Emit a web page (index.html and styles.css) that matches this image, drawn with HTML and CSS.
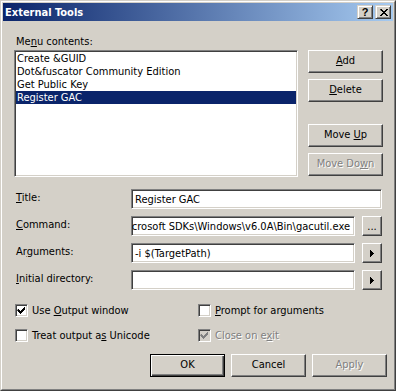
FILE: index.html
```html
<!DOCTYPE html>
<html>
<head>
<meta charset="utf-8">
<title>External Tools</title>
<link rel="stylesheet" href="styles.css">
</head>
<body>
<div class="window">
  <div class="frame">
    <div class="titlebar">
      <span class="title">External Tools</span>
      <div class="cap cap-help">?</div>
      <div class="cap cap-close"><svg width="8" height="7" viewBox="0 0 8 7"><path d="M0 0h2v1h1v1h2v-1h1v-1h2v1h-1v1h-1v1h-1v1h1v1h1v1h1v1h-2v-1h-1v-1h-2v1h-1v1h-2v-1h1v-1h1v-1h1v-1h-1v-1h-1z" fill="#000"/></svg></div>
    </div>
    <div class="client">
      <div class="menu-label">Me<u>n</u>u contents:</div>
      <div class="list-row">
        <div class="listbox">
          <div class="item">Create &amp;GUID</div>
          <div class="item">Dot&amp;fuscator Community Edition</div>
          <div class="item">Get Public Key</div>
          <div class="item selected">Register GAC</div>
        </div>
        <div class="side-btns">
          <div class="btn"><u>A</u>dd</div>
          <div class="btn"><u>D</u>elete</div>
          <div class="btn btn-sep">Move <u>U</u>p</div>
          <div class="btn disabled">Move Do<u>w</u>n</div>
        </div>
      </div>
      <div class="fields">
        <div class="flabel"><u>T</u>itle:</div>
        <div class="field field-wide">Register GAC</div>
        <div class="flabel"><u>C</u>ommand:</div>
        <div class="field field-scroll"><span>crosoft SDKs\Windows\v6.0A\Bin\gacutil.exe</span></div>
        <div class="small-btn dots">...</div>
        <div class="flabel">Ar<u>g</u>uments:</div>
        <div class="field">-i $(TargetPath)</div>
        <div class="small-btn"><svg width="4" height="7" viewBox="0 0 4 7"><path d="M0 0h1v1h1v1h1v1h1v1h-1v1h-1v1h-1v1h-1z" fill="#000"/></svg></div>
        <div class="flabel"><u>I</u>nitial directory:</div>
        <div class="field"></div>
        <div class="small-btn"><svg width="4" height="7" viewBox="0 0 4 7"><path d="M0 0h1v1h1v1h1v1h1v1h-1v1h-1v1h-1v1h-1z" fill="#000"/></svg></div>
      </div>
      <div class="checks">
        <div class="check">
          <span class="box"><svg width="9" height="9" viewBox="0 0 9 9"><path d="M1 3h1v1h1v1h1v-1h1v-1h1v-1h1v-1h1v3h-1v1h-1v1h-1v1h-1v1h-1v-1h-1v-1h-1v-1h-1z" fill="#000"/></svg></span>
          <span>Use <u>O</u>utput window</span>
        </div>
        <div class="check">
          <span class="box"></span>
          <span><u>P</u>rompt for arguments</span>
        </div>
        <div class="check">
          <span class="box"></span>
          <span>Treat output a<u>s</u> Unicode</span>
        </div>
        <div class="check">
          <span class="box box-disabled"><svg width="9" height="9" viewBox="0 0 9 9"><path d="M1 3h1v1h1v1h1v-1h1v-1h1v-1h1v-1h1v3h-1v1h-1v1h-1v1h-1v1h-1v-1h-1v-1h-1v-1h-1z" fill="#808080"/></svg></span>
          <span class="dtext">Close on e<u>x</u>it</span>
        </div>
      </div>
      <div class="footer">
        <div class="btn btn-default">OK</div>
        <div class="btn">Cancel</div>
        <div class="btn disabled">Apply</div>
      </div>
    </div>
  </div>
</div>
</body>
</html>
```

FILE: styles.css
```css
* {
  box-sizing: border-box;
}

html,
body {
  margin: 0;
  padding: 0;
}

body {
  background: #d4d0c8;
  font-family: "DejaVu Sans Condensed", "Liberation Sans", sans-serif;
  font-size: 11px;
  font-weight: 400;
  line-height: 13px;
  color: #000;
}

.window {
  width: 396px;
  height: 391px;
  border: 1px solid;
  border-color: #d4d0c8 #404040 #404040 #d4d0c8;
  background: #d4d0c8;
}

.frame {
  height: 100%;
  border: 1px solid;
  border-color: #fff #808080 #808080 #fff;
  padding: 1px;
  display: flex;
  flex-direction: column;
}

.titlebar {
  height: 18px;
  flex: none;
  background: linear-gradient(to right, #0a246a, #a6caf0);
  display: flex;
  align-items: center;
  padding: 0 2px 0 2px;
}

.title {
  flex: 1;
  color: #fff;
  font-weight: bold;
}

.cap {
  width: 16px;
  height: 14px;
  background: #d4d0c8;
  border: 1px solid;
  border-color: #d4d0c8 #404040 #404040 #d4d0c8;
  box-shadow: inset 1px 1px #fff, inset -1px -1px #808080;
  display: flex;
  align-items: center;
  justify-content: center;
  font-weight: bold;
  font-family: "Liberation Sans", sans-serif;
  font-size: 11px;
  line-height: 11px;
}

.cap-close {
  margin-left: 2px;
}

.cap-close svg {
  display: block;
  margin-left: 1px;
}

.client {
  flex: 1;
  padding: 14px 0 0 11px;
  display: flex;
  flex-direction: column;
}

.menu-label {
  margin-left: 2px;
  height: 13px;
}

.list-row {
  margin-top: 2px;
  display: flex;
  gap: 10px;
}

.listbox {
  width: 284px;
  height: 127px;
  background: #fff;
  border: 1px solid;
  border-color: #808080 #fff #fff #808080;
  box-shadow: inset 1px 1px #404040, inset -1px -1px #d4d0c8;
  padding: 1px;
}

.item {
  height: 13px;
  line-height: 13px;
  padding-left: 1px;
  white-space: nowrap;
}

.item.selected {
  background: #0a246a;
  color: #fff;
}

.side-btns {
  display: flex;
  flex-direction: column;
  gap: 6px;
}

.btn {
  width: 75px;
  height: 23px;
  background: #d4d0c8;
  border: 1px solid;
  border-color: #fff #404040 #404040 #fff;
  box-shadow: inset -1px -1px #808080;
  text-align: center;
  line-height: 20px;
  white-space: nowrap;
}

.btn-sep {
  margin-top: 16px;
}

.btn.disabled,
.dtext {
  color: #808080;
  text-shadow: 1px 1px 0 #fff;
}

.btn-default {
  border: 1px solid #000;
  box-shadow: inset 1px 1px #fff, inset -1px -1px #404040, inset -2px -2px #808080;
}

.fields {
  margin-top: 12px;
  padding-left: 2px;
  display: grid;
  grid-template-columns: 115px 224px 7px 20px;
  grid-auto-rows: 20px;
  row-gap: 7px;
}

.flabel {
  grid-column: 1;
  padding-top: 2px;
  white-space: nowrap;
}

.field {
  grid-column: 2;
  height: 20px;
  background: #fff;
  border: 1px solid;
  border-color: #808080 #fff #fff #808080;
  box-shadow: inset 1px 1px #404040, inset -1px -1px #d4d0c8;
  padding: 0 3px;
  display: flex;
  align-items: center;
  white-space: nowrap;
  overflow: hidden;
}

.field-wide {
  grid-column: 2 / 5;
}

.field-scroll {
  justify-content: flex-end;
  padding-right: 4px;
}

.field-scroll span {
  flex: none;
}

.small-btn {
  grid-column: 4;
  width: 20px;
  height: 20px;
  background: #d4d0c8;
  border: 1px solid;
  border-color: #fff #404040 #404040 #fff;
  box-shadow: inset -1px -1px #808080;
  display: flex;
  align-items: center;
  justify-content: center;
}

.small-btn svg {
  display: block;
}

.dots {
  align-items: flex-end;
  padding-bottom: 3px;
  line-height: 11px;
}

.checks {
  margin-top: 14px;
  padding-left: 1px;
  display: grid;
  grid-template-columns: 183px auto;
  grid-auto-rows: 13px;
  row-gap: 12px;
}

.check {
  display: flex;
  align-items: center;
  gap: 4px;
  white-space: nowrap;
}

.box {
  width: 13px;
  height: 13px;
  flex: none;
  background: #fff;
  border: 1px solid;
  border-color: #808080 #fff #fff #808080;
  box-shadow: inset 1px 1px #404040, inset -1px -1px #d4d0c8;
  padding: 1px;
}

.box svg {
  display: block;
}

.box-disabled {
  background: #d4d0c8;
}

.footer {
  margin-top: 12px;
  margin-right: 6px;
  display: flex;
  justify-content: flex-end;
  gap: 6px;
}
```
